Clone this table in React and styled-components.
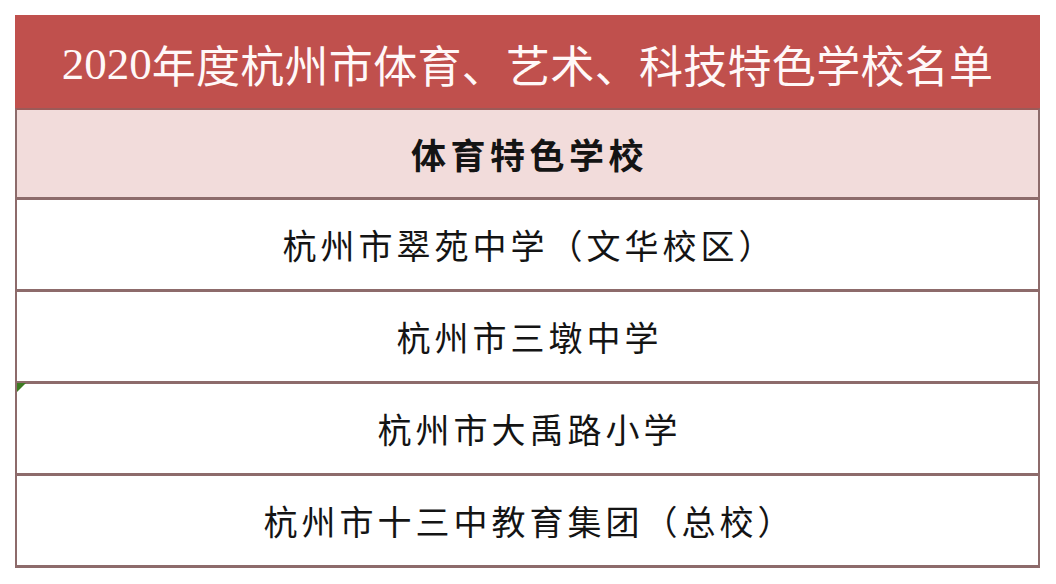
import React from "react";
import styled, { createGlobalStyle } from "styled-components";

const Global = createGlobalStyle`
  html, body {
    margin: 0;
    padding: 0;
    background: #ffffff;
  }
  body {
    font-family: "Liberation Serif", "Noto Sans CJK SC", serif;
  }
`;

const Sheet = styled.div`
  width: 1025px;
  margin: 15px 0 0 15px;
  display: flex;
  flex-direction: column;
`;

const TitleBar = styled.div`
  height: 93px;
  background: #c0504d;
  display: flex;
  align-items: center;
  justify-content: center;
  color: #fff8f8;
  font-family: "Liberation Serif", "Noto Sans CJK SC", serif;
  font-size: 44px;
  letter-spacing: 0.3px;
  padding-top: 4px;
  box-sizing: border-box;
`;

const Digits = styled.span`
  font-family: "Liberation Serif", "DejaVu Serif", serif;
  font-size: 45px;
  letter-spacing: 0;
`;

const Row = styled.div`
  position: relative;
  height: 92px;
  box-sizing: border-box;
  border-left: 2px solid #8d6b6b;
  border-right: 2px solid #8d6b6b;
  border-bottom: 3px solid #8d6b6b;
  border-top: ${(p) => (p.$first ? "2px solid #9c5a58" : "none")};
  background: ${(p) => (p.$tint ? "#f2dcdb" : "#ffffff")};
  display: flex;
  align-items: center;
  justify-content: center;
  font-family: "Noto Sans CJK SC", "Liberation Serif", serif;
  font-size: ${(p) => (p.$tint ? "35px" : "34px")};
  font-weight: ${(p) => (p.$tint ? 700 : 400)};
  letter-spacing: ${(p) => (p.$tint ? "4.5px" : "4px")};
  color: #141414;
  padding-left: 4px;
`;

const ErrorMark = styled.span`
  position: absolute;
  left: 0;
  top: -1px;
  width: 0;
  height: 0;
  border-top: 9px solid #3d7a22;
  border-right: 9px solid transparent;
`;

const schools = [
  "杭州市翠苑中学（文华校区）",
  "杭州市三墩中学",
  "杭州市大禹路小学",
  "杭州市十三中教育集团（总校）",
];

export default function App() {
  return (
    <>
      <Global />
      <Sheet>
        <TitleBar>
          <Digits>2020</Digits>年度杭州市体育、艺术、科技特色学校名单
        </TitleBar>
        <Row $tint $first>体育特色学校</Row>
        {schools.map((name, i) => (
          <Row key={name}>
            {i === 2 && <ErrorMark />}
            {name}
          </Row>
        ))}
      </Sheet>
    </>
  );
}
